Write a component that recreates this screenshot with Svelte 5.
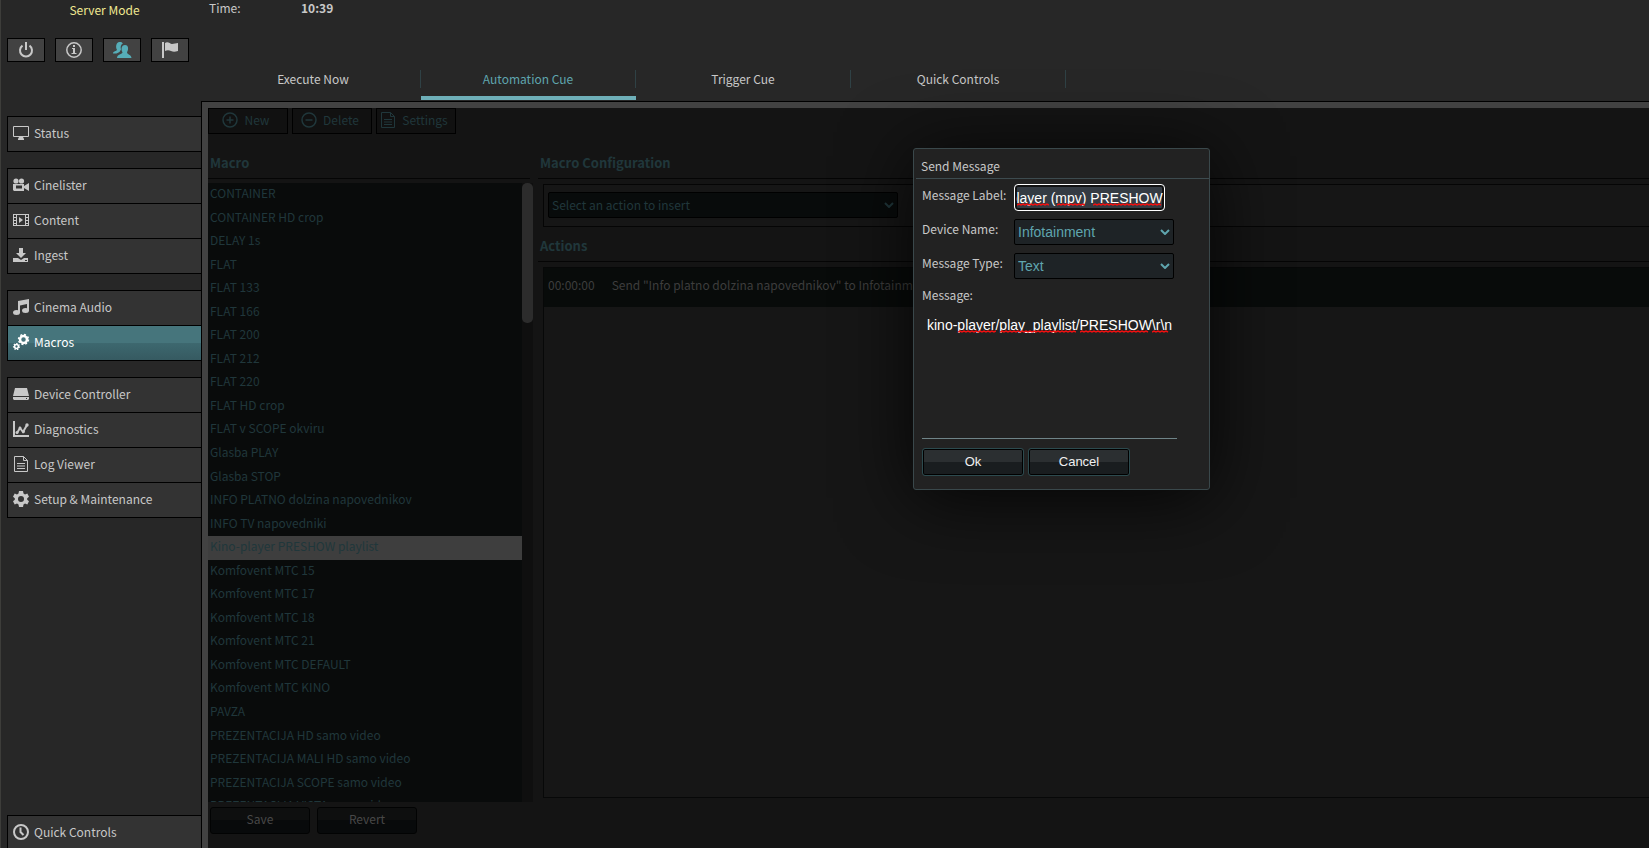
<script lang="ts">
  import { onMount } from "svelte";

  const tabs = ["Execute Now", "Automation Cue", "Trigger Cue", "Quick Controls"];

  const groups = [
    [["monitor", "Status"]],
    [["camera", "Cinelister"], ["film", "Content"], ["download", "Ingest"]],
    [["music", "Cinema Audio"], ["gears", "Macros"]],
    [["drive", "Device Controller"], ["chart", "Diagnostics"], ["document", "Log Viewer"], ["gear", "Setup & Maintenance"]],
  ];

  const macros = [
    "CONTAINER", "CONTAINER HD crop", "DELAY 1s", "FLAT", "FLAT 133", "FLAT 166",
    "FLAT 200", "FLAT 212", "FLAT 220", "FLAT HD crop", "FLAT v SCOPE okviru",
    "Glasba PLAY", "Glasba STOP", "INFO PLATNO dolzina napovednikov",
    "INFO TV napovedniki", "Kino-player PRESHOW playlist", "Komfovent MTC 15",
    "Komfovent MTC 17", "Komfovent MTC 18", "Komfovent MTC 21",
    "Komfovent MTC DEFAULT", "Komfovent MTC KINO", "PAVZA",
    "PREZENTACIJA HD samo video", "PREZENTACIJA MALI HD samo video",
    "PREZENTACIJA SCOPE samo video", "PREZENTACIJA VISTA samo video",
  ];

  // [left, width] of every misspelled run
  const labelMarks = [[3, 32], [43, 28], [79, 69]];
  const messageMarks = [[36, 38], [78, 76], [158, 69], [230, 17]];

  let activeTab = $state("Automation Cue");
  let activePage = $state("Macros");
  let selected = $state("Kino-player PRESHOW playlist");
  let label = $state("Kino-player (mpv) PRESHOW");
  let message = $state("kino-player/play_playlist/PRESHOW\\r\\n");
  let labelInput: HTMLInputElement;

  onMount(() => {
    labelInput.scrollLeft = labelInput.scrollWidth;
  });

  function squiggle(width) {
    let d = "M0 2";
    for (let x = 2; x <= width; x += 2) d += ` L${x} ${x % 4 ? 1 : 2}`;
    return d;
  }
</script>

{#snippet icon(name)}
  <svg class="icon" viewBox="0 0 16 16" width="16" height="16" aria-hidden="true">
    {#if name === "monitor"}
      <path class="line" d="M.5 1.5h15v10H.5z" />
      <path d="M6 12h4l1 2v1H5v-1z" />
    {:else if name === "camera"}
      <circle cx="3" cy="4" r="2.6" /><circle cx="8.5" cy="4" r="2.6" />
      <path fill-rule="evenodd" d="M0 7h11v2l5-3v8l-5-3v3H1l-1-1zM3 8.5v3h6v-3z" />
    {:else if name === "film"}
      <path fill-rule="evenodd" d="M0 2h16v12H0zM1 3v2h2V3zm0 3v2h2V6zm0 3v2h2V9zm0 3v1h2v-1zM13 3v2h2V3zm0 3v2h2V6zm0 3v2h2V9zm0 3v1h2v-1zM4 3v10h8V3z" />
      <path d="M6 5l4 3-4 3z" />
    {:else if name === "download"}
      <path d="M6 1h4v5h3l-5 5-5-5h3z" />
      <path fill-rule="evenodd" d="M0 11h5l3 2 3-2h4v4H0zM12 13v1h2v-1z" />
    {:else if name === "music"}
      <path d="M5 2l11-2v12h-2V5L7 6.5V14H5z" />
      <ellipse cx="3.5" cy="13.5" rx="3.5" ry="2.5" /><ellipse cx="12.5" cy="11.5" rx="3.5" ry="2.5" />
    {:else if name === "gears"}
      <circle class="line" cx="10.5" cy="5.5" r="3.5" stroke-width="2.5" />
      <circle class="line" cx="10.5" cy="5.5" r="5" stroke-width="1.4" stroke-dasharray="1.96 1.96" />
      <circle class="line" cx="3.5" cy="12.5" r="1.9" stroke-width="1.5" />
      <circle class="line" cx="3.5" cy="12.5" r="3" stroke-width="1.2" stroke-dasharray="1.35 1.35" />
    {:else if name === "drive"}
      <path d="M2 2h12l2 8H0z" />
      <path fill-rule="evenodd" d="M0 11h16v2l-1 1H1l-1-1zM13 12v1h1v-1z" />
    {:else if name === "chart"}
      <path d="M0 0h2v14h14v2H0z" />
      <path class="line" d="M4 12l3-5 3 4 4-7" stroke-width="2" />
      <circle cx="4" cy="11.5" r="1.5" /><circle cx="7" cy="7" r="1.5" /><circle cx="10.5" cy="10.5" r="1.5" /><circle cx="14" cy="4" r="1.7" />
    {:else if name === "document"}
      <path class="line" d="M1.5.5h9l4 4v11h-13zM10.5.5v4h4M4 7.5h8M4 10h8M4 12.5h8" />
    {:else if name === "gear"}
      <path fill-rule="evenodd" d="M6 0h4l.5 2.5 1.5.9 2.3-.9L16 5.700l-1.800 1.600v1.400L16 10.300l-1.700 3.200-2.300-.9-1.500.9L10 16H6l-.5-2.500-1.500-.9-2.300.9L0 10.300l1.800-1.600V7.300L0 5.700l1.700-3.200 2.300.9 1.500-.9zM8 5a3 3 0 100 6 3 3 0 000-6z" />
    {:else if name === "clock"}
      <circle class="line" cx="8" cy="8" r="7" stroke-width="2" />
      <path class="line" d="M7.5 3.5V8l3 3" stroke-width="2" />
    {:else if name === "power"}
      <path class="line" d="M4.5 3.6a6 6 0 107 0" stroke-width="2" />
      <path d="M7 0h2v8H7z" />
    {:else if name === "info"}
      <circle class="line" cx="8" cy="8" r="7.2" stroke-width="1.5" />
      <path d="M7 3h2v2H7zM6 6h3v5h1.5v1h-5v-1H7V7H6z" />
    {:else if name === "users"}
      <path d="M5 0c2-.4 3.500.3 3.800 1.400C6.800 2.600 6.300 5 7 7.500L5.500 10l-3 1.500H-1c0-2.500 3.500-2 4-3.700C1.600 5.800 1.800.8 5 0z" />
      <path d="M11 3c4 0 3.500 5 2 7.200 0 2.300 4.500 2.300 4.500 5.800H3c0-4 5.500-3.500 5.500-5.800C7 8 7 3 11 3z" />
    {:else if name === "flag"}
      <path d="M0 0h2v16H0zM3 1c3-2 5 1 7 1s4-1 6-1v8c-3 1-5 1-7 0S5 8 3 9z" />
    {:else if name === "plus"}
      <circle class="line" cx="8" cy="8" r="7" stroke-width="1.5" />
      <path class="line" d="M8 4.5v7M4.5 8h7" stroke-width="1.5" />
    {:else if name === "minus"}
      <circle class="line" cx="8" cy="8" r="7" stroke-width="1.5" />
      <path class="line" d="M4.5 8h7" stroke-width="1.5" />
    {/if}
  </svg>
{/snippet}

{#snippet chevron()}
  <svg class="chevron" viewBox="0 0 10 6" width="10" height="6" aria-hidden="true">
    <path d="M1 1l4 4 4-4" />
  </svg>
{/snippet}

{#snippet marks(list)}
  {#each list as [left, width]}
    <svg class="mark" style="left: {left}px" {width} height="3" aria-hidden="true">
      <path d={squiggle(width)} />
    </svg>
  {/each}
{/snippet}

<div class="app">
  <aside>
    <div class="mode">Server Mode</div>
    <div class="quick">
      <button title="Power">{@render icon("power")}</button>
      <button title="Info">{@render icon("info")}</button>
      <button title="Users" class="on">{@render icon("users")}</button>
      <button title="Flag">{@render icon("flag")}</button>
    </div>
    <nav>
      {#each groups as group}
        <div class="group">
          {#each group as [name, text]}
            <button class:active={activePage === text} onclick={() => (activePage = text)}>
              {@render icon(name)}{text}
            </button>
          {/each}
        </div>
      {/each}
      <div class="group last">
        <button>{@render icon("clock")}Quick Controls</button>
      </div>
    </nav>
  </aside>

  <div class="content">
    <header>
      <div class="time"><span>Time:</span><b>10:39</b></div>
      <div class="tabs">
        {#each tabs as tab}
          <button class:active={activeTab === tab} onclick={() => (activeTab = tab)}><span>{tab}</span></button>
        {/each}
      </div>
    </header>

    <main>
      <div class="toolbar">
        <button>{@render icon("plus")}New</button>
        <button>{@render icon("minus")}Delete</button>
        <button>{@render icon("document")}Settings</button>
      </div>

      <div class="columns">
        <section class="macros">
          <h2>Macro</h2>
          <div class="list">
            <ul>
              {#each macros as macro}
                <li><button class:selected={selected === macro} onclick={() => (selected = macro)}>{macro}</button></li>
              {/each}
            </ul>
            <div class="track"><div class="thumb"></div></div>
          </div>
          <div class="buttons">
            <button>Save</button>
            <button>Revert</button>
          </div>
        </section>

        <section class="config">
          <h2>Macro Configuration</h2>
          <div class="insert">
            <div class="select">
              <select aria-label="Action"><option>Select an action to insert</option></select>
              {@render chevron()}
            </div>
          </div>
          <h2>Actions</h2>
          <div class="actions">
            <div class="action">
              <span>00:00:00</span>
              <span>Send "Info platno dolzina napovednikov" to Infotainment</span>
            </div>
          </div>
        </section>
      </div>
    </main>
  </div>

  <div class="dialog" role="dialog" aria-labelledby="dialog-title">
    <h3 id="dialog-title">Send Message</h3>
    <form onsubmit={(e) => e.preventDefault()}>
      <div class="row">
        <label for="label">Message Label:</label>
        <div class="field">
          <input id="label" type="text" spellcheck="false" bind:value={label} bind:this={labelInput} />
          {@render marks(labelMarks)}
        </div>
      </div>
      <div class="row">
        <label for="device">Device Name:</label>
        <div class="select">
          <select id="device"><option>Infotainment</option></select>
          {@render chevron()}
        </div>
      </div>
      <div class="row">
        <label for="type">Message Type:</label>
        <div class="select">
          <select id="type"><option>Text</option></select>
          {@render chevron()}
        </div>
      </div>
      <label for="message" class="block">Message:</label>
      <div class="field area">
        <textarea id="message" spellcheck="false" bind:value={message}></textarea>
        {@render marks(messageMarks)}
      </div>
      <div class="buttons">
        <button>Ok</button>
        <button type="button">Cancel</button>
      </div>
    </form>
  </div>
</div>

<style>
  :global(body) {
    margin: 0;
    background: #272727;
  }

  * {
    box-sizing: border-box;
  }

  .app {
    position: relative;
    display: flex;
    height: 100vh;
    overflow: hidden;
    border-left: 1px solid #3d3d3a;
    color: #c8c8c8;
    font: 12px/20px "Noto Sans CJK SC", "Noto Sans", sans-serif;
  }

  button,
  select,
  input,
  textarea {
    margin: 0;
    font: inherit;
    color: inherit;
  }

  button {
    cursor: pointer;
  }

  .icon {
    flex: none;
    fill: currentColor;
    overflow: visible;
  }

  .icon .line {
    fill: none;
    stroke: currentColor;
  }

  aside {
    display: flex;
    flex-direction: column;
    flex: none;
    width: 201px;
    padding-left: 6px;
  }

  .mode {
    height: 38px;
    color: #f0e891;
    text-align: center;
  }

  .quick {
    display: flex;
    gap: 10px;
    margin-bottom: 54px;
  }

  .quick button {
    display: flex;
    align-items: center;
    justify-content: center;
    width: 38px;
    height: 24px;
    padding: 0;
    border: 1px solid #000;
    background: #424242;
  }

  .quick .on {
    color: #56adb8;
  }

  nav {
    display: flex;
    flex-direction: column;
    flex: 1;
    gap: 16px;
  }

  .group {
    border: 1px solid #000;
    border-width: 1px 0 0 1px;
  }

  .group button {
    display: flex;
    align-items: center;
    gap: 5px;
    width: 100%;
    height: 35px;
    padding: 0 5px 2px;
    border: 0;
    border-bottom: 1px solid #000;
    background: #333;
  }

  .group .active {
    background: linear-gradient(#46757c 50%, #3d686f 50%, #365a61);
    color: #fff;
  }

  .last {
    margin-top: auto;
    margin-bottom: -3px;
  }

  .content {
    display: flex;
    flex-direction: column;
    flex: 1;
    min-width: 0;
  }

  .time {
    display: flex;
    height: 60px;
    padding-left: 7px;
    line-height: 15px;
  }

  .time span {
    width: 92px;
  }

  .tabs {
    display: flex;
    height: 42px;
    padding-left: 4px;
  }

  .tabs button {
    width: 215px;
    margin-bottom: 2px;
    padding: 10px 0 8px;
    border: 0;
    border-bottom: 4px solid transparent;
    background: none;
  }

  .tabs span {
    display: block;
    border-right: 1px solid #2f4145;
    line-height: 18px;
  }

  .tabs .active {
    border-color: #6eafb8;
    color: #5fa5ae;
  }

  main {
    display: flex;
    flex-direction: column;
    flex: 1;
    min-height: 0;
    border: 6px solid #424242;
    border-width: 6px 0 0 6px;
    outline: 1px solid #000;
    background: #141414;
    color: #20373b;
  }

  .toolbar {
    display: flex;
    gap: 4px;
  }

  .toolbar button {
    display: flex;
    align-items: center;
    justify-content: center;
    gap: 6px;
    width: 80px;
    height: 26px;
    padding: 0 4px 3px 0;
    border: 1px solid #000;
    background: #111;
  }

  .columns {
    display: flex;
    flex: 1;
    gap: 5px;
    min-height: 0;
    padding-top: 16px;
  }

  section {
    display: flex;
    flex-direction: column;
    min-height: 0;
  }

  h2 {
    flex: none;
    height: 29px;
    margin: 0 0 4px;
    padding: 3px 2px 0;
    border-bottom: 1px solid #050505;
    font-size: 13px;
    font-weight: 700;
    line-height: 20px;
  }

  .macros {
    flex: none;
    width: 325px;
  }

  .macros h2 {
    margin-right: 3px;
  }

  .list {
    display: flex;
    flex: 1;
    min-height: 0;
  }

  ul {
    flex: 1;
    margin: 0;
    padding: 0;
    overflow: hidden;
    list-style: none;
    background: #090b0b;
  }

  li button {
    display: block;
    width: 100%;
    padding: 0 2px 4px;
    border: 0;
    background: none;
    line-height: 1.63;
    text-align: left;
  }

  li .selected {
    background: #3e3e3e;
  }

  .track {
    width: 11px;
    background: #0f0f0f;
  }

  .thumb {
    height: 140px;
    border-radius: 5px;
    background: #2c2c2c;
  }

  .buttons {
    display: flex;
  }

  .macros .buttons {
    gap: 7px;
    padding: 5px 2px 14px;
  }

  .macros .buttons button {
    width: 100px;
    height: 27px;
    padding: 0 0 4px;
    border: 1px solid #020303;
    border-radius: 3px;
    background: linear-gradient(#0e0f0f 50%, #080a0b 50%);
    color: #484848;
  }

  .config {
    flex: 1;
    min-width: 0;
  }

  .insert {
    height: 43px;
    margin: 1px 0 6px 5px;
    padding: 7px 4px;
    border: 1px solid #050505;
    border-right: 0;
    background: #161616;
  }

  .select {
    position: relative;
    width: 160px;
  }

  .select select {
    display: block;
    appearance: none;
    width: 100%;
    height: 26px;
    padding: 0 3px;
    border: 1px solid #000;
    border-radius: 2px;
    background: #1e2326;
  }

  .chevron {
    position: absolute;
    top: 10px;
    right: 4px;
    fill: none;
    stroke: currentColor;
    stroke-width: 2;
    pointer-events: none;
  }

  .insert .select {
    width: 350px;
  }

  .insert select {
    background: #080b0b;
  }

  .actions {
    flex: 1;
    margin: 1px 0 50px 5px;
    border: 1px solid #070808;
    border-right: 0;
    background: #161616;
  }

  .action {
    display: flex;
    gap: 17px;
    height: 39px;
    padding: 0 4px;
    background: #080b0a;
    color: #3d3d3d;
    line-height: 34px;
  }

  .dialog {
    position: absolute;
    top: 148px;
    left: 912px;
    width: 297px;
    padding: 6px 0 13px 8px;
    border: 1px solid #3a484b;
    border-radius: 3px;
    background: #222;
    box-shadow: 0 8px 72px rgba(0, 0, 0, 0.8);
  }

  h3 {
    height: 24px;
    margin: 0 0 6px -6px;
    padding-left: 5px;
    border-bottom: 1px solid #3d4b4f;
    font-size: 12px;
    font-weight: 400;
    line-height: 22px;
  }

  .row {
    display: flex;
    height: 34px;
  }

  .row label {
    width: 92px;
    line-height: 20px;
  }

  .field {
    position: relative;
  }

  .row .field {
    margin-top: -1px;
  }

  input {
    display: block;
    width: 151px;
    height: 27px;
    padding: 0 1px;
    border: 1px solid #fff;
    border-radius: 4px;
    outline: 0;
    background: #343b43;
    box-shadow: inset 0 0 0 2px #111;
    color: #fff;
    font: 14px "Liberation Sans", Arial, sans-serif;
  }

  .dialog .select {
    color: #5fa5ae;
    font: 14px "Liberation Sans", Arial, sans-serif;
  }

  .block {
    display: block;
    height: 20px;
    line-height: 16px;
  }

  textarea {
    display: block;
    width: 255px;
    height: 132px;
    padding: 10px 0 10px 5px;
    border: 0;
    border-bottom: 1px solid #6f8488;
    outline: 0;
    background: none;
    color: #fff;
    font: 14px/16px "Liberation Sans", Arial, sans-serif;
    resize: none;
  }

  .mark {
    position: absolute;
    top: 19px;
    fill: none;
    stroke: #f01010;
    stroke-width: 1.5;
    pointer-events: none;
  }

  .area .mark {
    top: 23px;
  }

  .dialog .buttons {
    gap: 4px;
    margin-top: 9px;
  }

  .dialog .buttons button {
    width: 102px;
    height: 28px;
    padding: 0 0 1px;
    border: 1px solid #2c4a4e;
    border-radius: 3px;
    background: linear-gradient(#2b2f31 50%, #191d1f 50%);
    box-shadow: inset 0 0 0 1px #000;
    color: #f0f0f0;
    font: 13px "Liberation Sans", Arial, sans-serif;
  }
</style>
